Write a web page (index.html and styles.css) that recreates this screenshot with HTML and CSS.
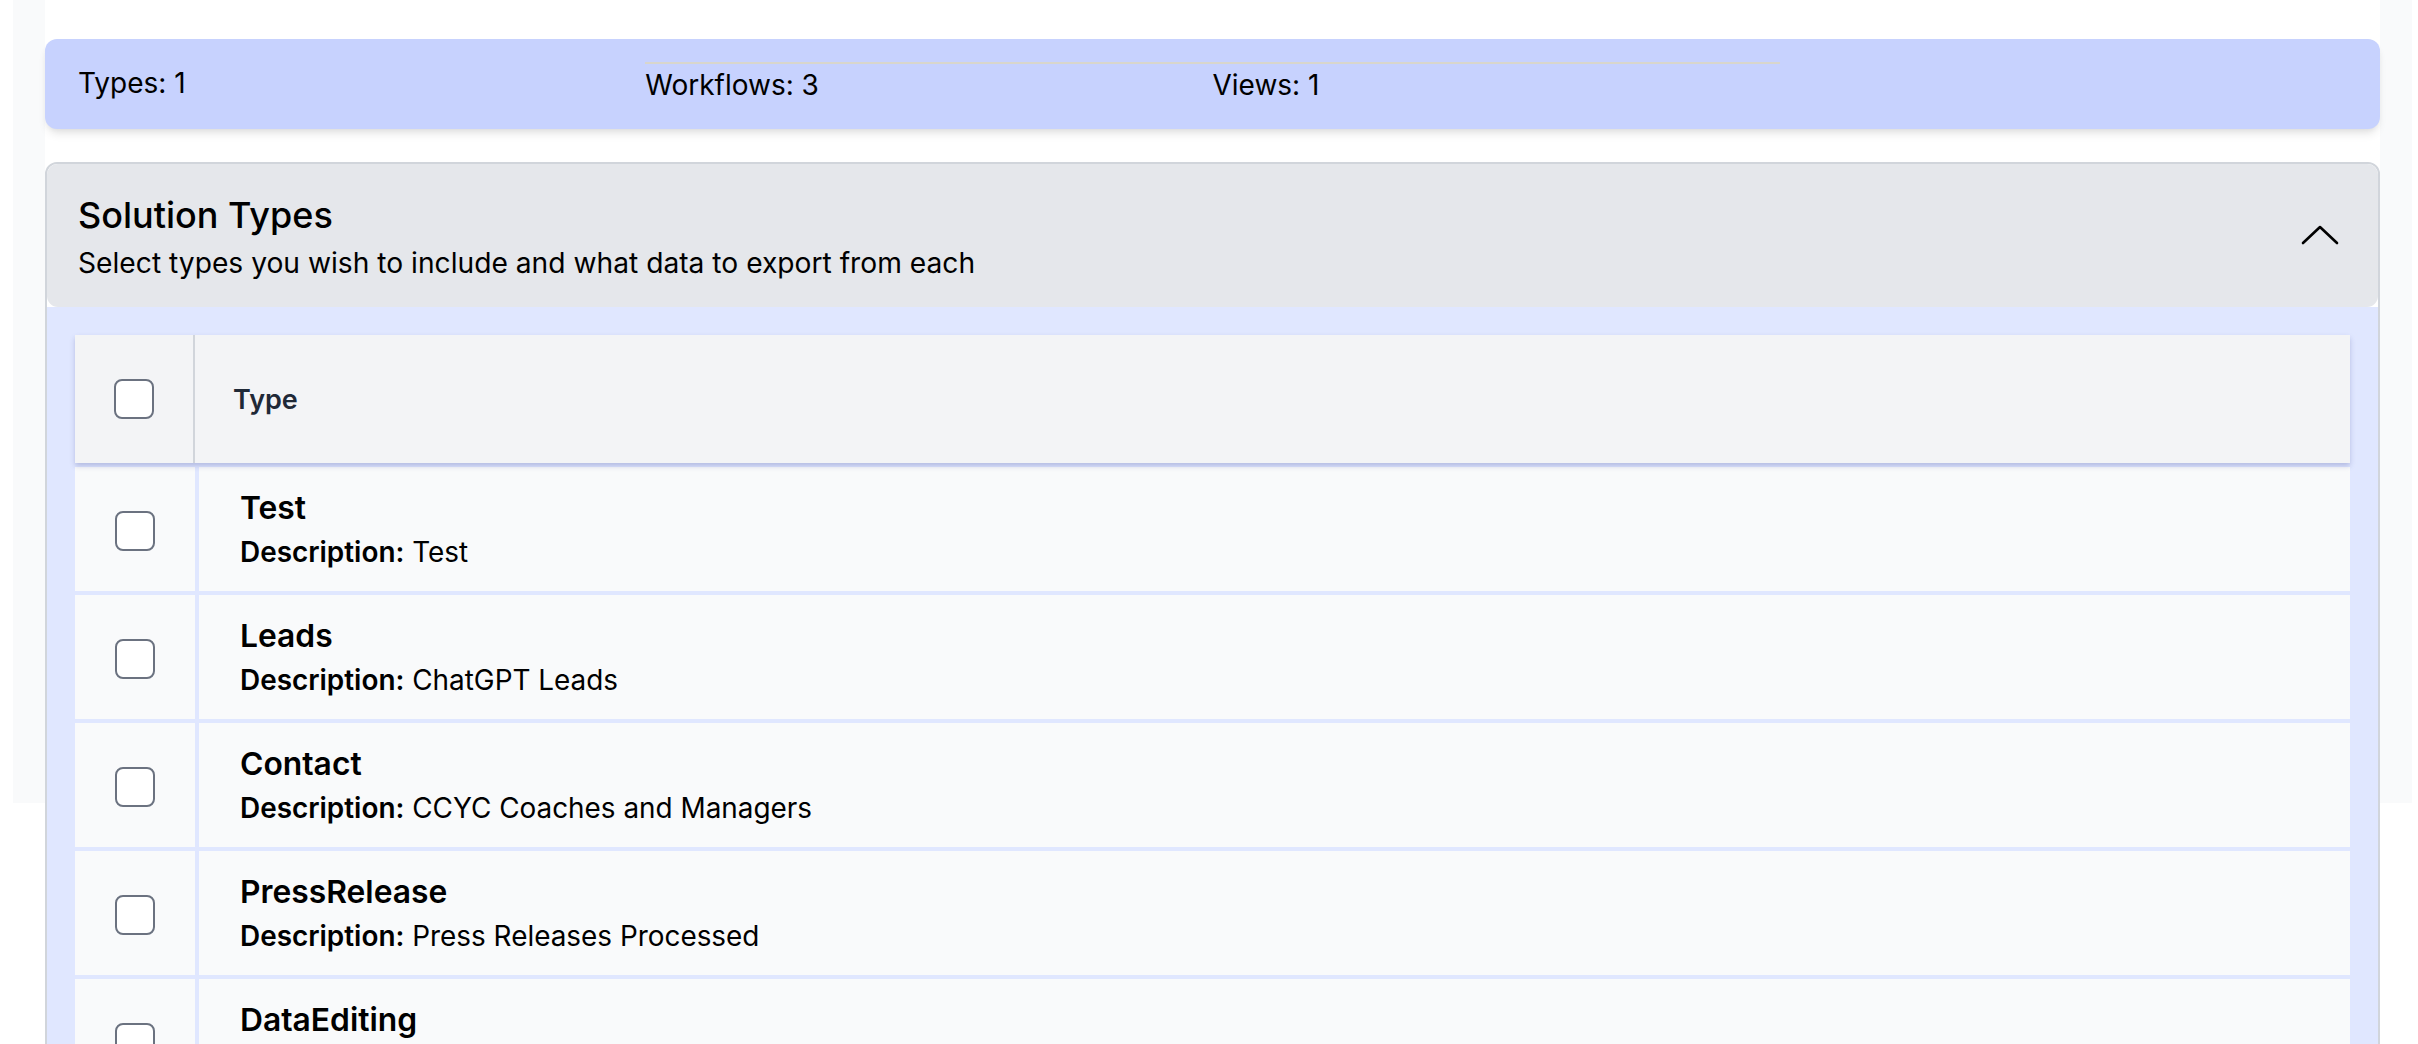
FILE: index.html
```html
<!DOCTYPE html>
<html lang="en">
<head>
<meta charset="utf-8">
<title>Solution Export</title>
<link rel="stylesheet" href="styles.css">
</head>
<body>
<div class="page">
  <div class="inner">
    <div class="stats">
      <div class="stat">Types: 1</div>
      <div class="stat stat-line">Workflows: 3</div>
      <div class="stat stat-line">Views: 1</div>
      <div class="stat"></div>
    </div>

    <section class="card">
      <div class="card-head">
        <div class="card-titles">
          <h2 class="card-title">Solution Types</h2>
          <p class="card-sub">Select types you wish to include and what data to export from each</p>
        </div>
        <svg class="chevron" width="38" height="22" viewBox="0 0 38 22" aria-hidden="true">
          <polyline points="2,19 19,3 36,19" fill="none" stroke="#000" stroke-width="2.6" stroke-linecap="round" stroke-linejoin="round"/>
        </svg>
      </div>
      <div class="card-body">
        <div class="table">
          <div class="thead">
            <div class="th-check"><span class="cb"></span></div>
            <div class="th-type">Type</div>
          </div>
          <div class="row">
            <div class="td-check"><span class="cb"></span></div>
            <div class="td-main">
              <div class="row-title">Test</div>
              <div class="row-desc"><b>Description:</b> Test</div>
            </div>
          </div>
          <div class="row">
            <div class="td-check"><span class="cb"></span></div>
            <div class="td-main">
              <div class="row-title">Leads</div>
              <div class="row-desc"><b>Description:</b> ChatGPT Leads</div>
            </div>
          </div>
          <div class="row">
            <div class="td-check"><span class="cb"></span></div>
            <div class="td-main">
              <div class="row-title">Contact</div>
              <div class="row-desc"><b>Description:</b> CCYC Coaches and Managers</div>
            </div>
          </div>
          <div class="row">
            <div class="td-check"><span class="cb"></span></div>
            <div class="td-main">
              <div class="row-title">PressRelease</div>
              <div class="row-desc"><b>Description:</b> Press Releases Processed</div>
            </div>
          </div>
          <div class="row">
            <div class="td-check"><span class="cb"></span></div>
            <div class="td-main">
              <div class="row-title">DataEditing</div>
              <div class="row-desc"><b>Description:</b> Data Editing</div>
            </div>
          </div>
        </div>
      </div>
    </section>
  </div>
</div>
</body>
</html>
```

FILE: styles.css
```css
* { box-sizing: border-box; }

html {
  overflow: hidden;
  background: #ffffff;
}

body {
  margin: 0;
  padding: 0;
  background: #ffffff;
  font-family: Inter, "Noto Sans", "Liberation Sans", sans-serif;
  color: #000;
}

.page {
  margin-left: 13px;
  width: 2399px;
  padding: 0 32px;
  background: linear-gradient(#f9fafb, #f9fafb) 0 0 / 100% 803px no-repeat;
}

.inner {
  background: #ffffff;
  padding-top: 39px;
}

/* stats bar */
.stats {
  display: grid;
  grid-template-columns: repeat(4, 1fr);
  background: #c7d2fe;
  border-radius: 12px;
  padding: 23px 33px;
  box-shadow: 0 7px 10px -2px rgba(0,0,0,0.09), 0 3px 7px -3px rgba(0,0,0,0.09);
  font-size: 28px;
  line-height: 42px;
}

.stat-line {
  border-top: 2px solid #d8d6cc;
}

/* card */
.card {
  margin-top: 33px;
  border: 2px solid #d1d5db;
  border-radius: 12px;
  background: #ffffff;
}

.card-head {
  display: flex;
  align-items: center;
  justify-content: space-between;
  background: #e5e7eb;
  border-radius: 11px;
  padding: 27px 39px 23px 31px;
}

.card-title {
  margin: 0;
  font-size: 36px;
  line-height: 49px;
  font-weight: 500;
}

.card-sub {
  margin: 2px 0 0;
  font-size: 28.2px;
  line-height: 42px;
}

.chevron {
  display: block;
  margin-top: -6px;
}

.card-body {
  background: #e0e7ff;
  padding: 28px 28px 40px;
  border-radius: 0 0 10px 10px;
}

.table {
  display: flex;
  flex-direction: column;
  gap: 4px;
}

.thead {
  position: relative;
  z-index: 1;
  display: flex;
  gap: 4px;
  height: 128px;
  background: #f3f4f6;
  box-shadow: 0 3px 5px rgba(70,80,150,0.28);
}

.th-check {
  width: 120px;
  border-right: 2px solid #d1d5db;
  display: flex;
  align-items: center;
  justify-content: center;
}

.th-type {
  flex: 1;
  display: flex;
  align-items: center;
  padding-left: 34px;
  font-size: 27px;
  font-weight: 600;
  color: #1f2937;
  background: #f3f4f6;
}

.row {
  display: flex;
  gap: 4px;
  height: 124px;
}

.td-check {
  width: 120px;
  background: #f9fafb;
  display: flex;
  align-items: center;
  justify-content: center;
}

.td-main {
  flex: 1;
  background: #f9fafb;
  padding: 17px 0 0 41px;
}

.row-title {
  font-size: 31.8px;
  line-height: 47px;
  font-weight: 600;
}

.row-desc {
  font-size: 27.9px;
  line-height: 42px;
}

.row-desc b {
  font-weight: 600;
}

.cb {
  display: block;
  width: 40px;
  height: 40px;
  background: #ffffff;
  border: 2.5px solid #6b7280;
  border-radius: 8px;
}

.td-check .cb {
  margin-top: 4px;
}
```
